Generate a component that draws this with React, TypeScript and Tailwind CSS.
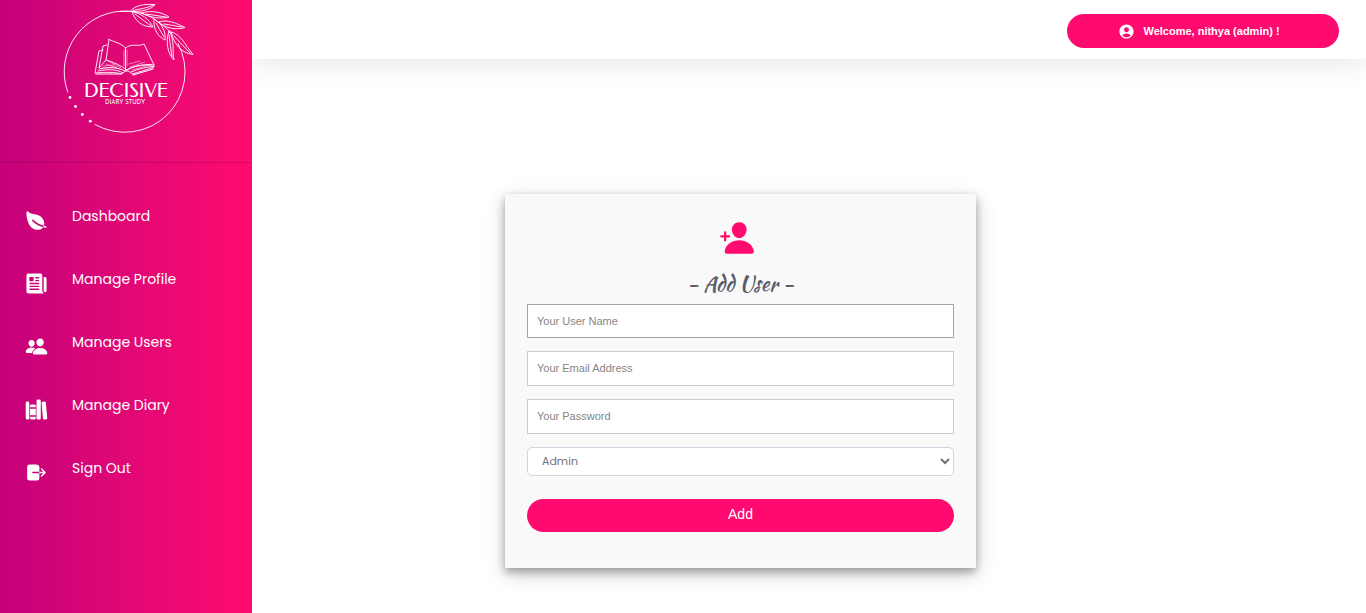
import { IoLeaf, IoNewspaper, IoPeople, IoLibrary, IoLogOut, IoPersonAdd } from "react-icons/io5";
import { MdAccountCircle } from "react-icons/md";
import type { IconType } from "react-icons";

const links: { label: string; Icon: IconType }[] = [
  { label: "Dashboard", Icon: IoLeaf },
  { label: "Manage Profile", Icon: IoNewspaper },
  { label: "Manage Users", Icon: IoPeople },
  { label: "Manage Diary", Icon: IoLibrary },
  { label: "Sign Out", Icon: IoLogOut },
];

function Logo() {
  return (
    <svg viewBox="0 0 145 140" className="h-[140px] w-[145px]" fill="none" stroke="white" strokeLinecap="round" strokeLinejoin="round" role="img" aria-label="Decisive Diary Study">
      <path d="M11.7 92A60.400 60.400 0 0 1 73 11.200M122 43.500A60.400 60.400 0 0 1 39 124.500" strokeWidth="0.9" />
      <g fill="white" stroke="none">
        <circle cx="14" cy="97.500" r="1.4" />
        <circle cx="19.500" cy="106.500" r="1.4" />
        <circle cx="26.300" cy="114.500" r="1.4" />
        <circle cx="34.300" cy="121.200" r="1.4" />
      </g>
      <g strokeWidth="0.9">
        <path d="M64 11.500C82 10 94 15 102 22C109 27 113 30 116 34" />
        <path d="M74 11.500C79 5 88 4 99 4.500C96 9 87 12 74 11.500ZM77 10.500C84 9 91 8 98 5" />
        <path d="M76 11.500C79 21 86 27 97 27C93 19 86 14 76 11.500ZM79 14L95 26" />
        <path d="M85 13C95 10 106 12 113 17C105 19 95 18 85 13ZM90 14L110 17" />
        <path d="M98 19C97 29 102 37 109 40C110 31 106 24 98 19ZM100 23L108 37" />
        <path d="M103 22C111 19 120 23 129 27.500C121 30 110 29 103 22ZM108 24L126 27" />
        <path d="M113 31C109 42 112 54 118 60C116 50 119 40 113 31ZM113 35L116 57" />
        <path d="M115 32C125 34 129 45 137 54.500C125 53 118 44 115 32ZM118 36L134 53" />
      </g>
      <g strokeWidth="0.9">
        <path d="M53 39.500C58 42 65 43 69.500 48C75 43 82 47 88 44L98 65C89 64 77 66 71 70C66 66 57 62 50 60L53 39.500Z" />
        <path d="M69.500 48V70M51 45L47 46L43 68L50 60M47 50L43 51L39 73C49 72 60 72 66 74C69 70 73 70 76 74C83 72 90 70 98 67V65" />
        <path d="M43 69C51 67 61 67 69 71C77 66 88 64 96 65M42 71C51 69 61 69 67 73M75 72C82 69 90 67 97 66.500" />
        <path d="M40 74H65M77 75L97 69" strokeWidth="1.2" />
        <path d="M52 61L65 68M47 66L58 65M50 64L64 69M74 67L89 62M76 70L94 65M68 50V66M71 50V66M46 68L60 67M73 64L84 61" strokeWidth="0.5" />
      </g>
      <g fill="white" stroke="none">
        <text x="70" y="97" textAnchor="middle" fontSize="19" className="font-['Federo','Poppins',sans-serif]">DECISIVE</text>
        <text x="69" y="104" textAnchor="middle" fontSize="6" className="font-['Josefin_Sans','DejaVu_Sans',sans-serif]">DIARY STUDY</text>
      </g>
    </svg>
  );
}

const field = "w-full border bg-white px-[9px] pb-px text-[11px] text-gray-700 outline-none placeholder:text-[#858585]";

export default function App() {
  return (
    <div className="flex min-h-screen bg-white font-['Liberation_Sans',Arial,sans-serif]">
      <aside className="relative z-10 w-[252px] shrink-0 bg-linear-to-r from-[#c4007a] to-[#ff0a6f]">
        <div className="flex h-[163px] justify-center border-b border-[#00000026] pl-1">
          <Logo />
        </div>
        <nav className="flex flex-col gap-[39px] pt-[41px]">
          {links.map(({ label, Icon }) => (
            <a key={label} href="#" className="flex h-6 gap-6 pl-[25px] font-['Poppins',Inter,sans-serif] text-sm leading-6 text-white">
              <Icon className="mt-[5px] size-[23px] shrink-0" />
              {label}
            </a>
          ))}
        </nav>
      </aside>
      <div className="flex min-w-0 flex-1 flex-col">
        <header className="flex h-[59px] items-start justify-end pt-3.5 pr-[27px] shadow-[0_2px_28px_rgba(58,59,69,0.15)]">
          <button type="button" className="flex h-[34px] w-[272px] items-center justify-center gap-2 rounded-full bg-[#ff0a6f] pr-2 text-[11px] font-bold text-white">
            <MdAccountCircle className="size-[17px]" />
            Welcome, nithya (admin) !
          </button>
        </header>
        <main className="flex justify-center pt-[135px] pr-[137px]">
          <form className="flex h-[374px] w-[471px] flex-col bg-[#f9f9f9] px-[22px] pt-[26px] shadow-[0_4px_8px_rgba(0,0,0,0.3),0_6px_20px_rgba(0,0,0,0.19)]">
            <div className="flex justify-center pr-2">
              <IoPersonAdd className="size-9 text-[#ff0a6f]" />
            </div>
            <h1 className="mt-1.5 h-[42px] text-center font-['Kaushan_Script',Lato,cursive] text-[21px] leading-[44px] text-[#5a5c69]">- Add User -</h1>
            <input autoFocus aria-label="User name" placeholder="Your User Name" className={`${field} h-[34px] border-[#a5a5a5]`} />
            <input type="email" aria-label="Email address" placeholder="Your Email Address" className={`${field} mt-[13px] h-[35px] border-[#cccccc]`} />
            <input type="password" aria-label="Password" placeholder="Your Password" className={`${field} mt-[13px] h-[35px] border-[#cccccc]`} />
            <select aria-label="Role" className="mt-[13px] h-[29px] w-full rounded-[5px] border border-[#d1d3e2] bg-white pb-0.5 pl-2.5 font-['Poppins',Inter,sans-serif] text-[11px] text-[#6e707e]">
              <option>Admin</option>
              <option>User</option>
            </select>
            <button type="submit" className="mt-[23px] h-[33px] rounded-full bg-[#ff0a6f] pb-[3px] text-sm text-white">Add</button>
          </form>
        </main>
      </div>
    </div>
  );
}
